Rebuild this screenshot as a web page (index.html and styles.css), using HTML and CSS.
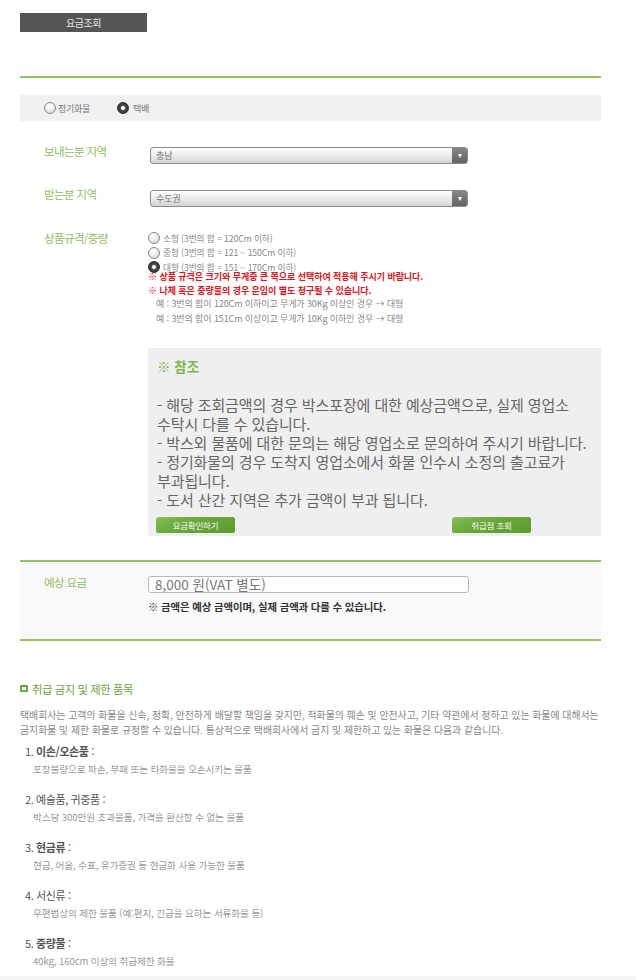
FILE: index.html
```html
<!DOCTYPE html>
<html lang="ko">
<head>
<meta charset="utf-8">
<title>요금조회</title>
<link rel="stylesheet" href="styles.css">
</head>
<body>
<div class="page">
  <div class="tab">요금조회</div>
  <div class="rule rule-top"></div>

  <div class="typebar">
    <span class="opt"><span class="radio"></span>정기화물</span>
    <span class="opt opt-2"><span class="radio on"></span>택배</span>
  </div>

  <div class="row row-first">
    <div class="label">보내는분 지역</div>
    <div class="select"><span class="sel-text">충남</span><span class="sel-arrow"></span></div>
  </div>

  <div class="row">
    <div class="label">받는분 지역</div>
    <div class="select"><span class="sel-text">수도권</span><span class="sel-arrow"></span></div>
  </div>

  <div class="row row-size">
    <div class="label label-size">상품규격/중량</div>
    <div class="sizes">
      <div class="size"><span class="radio"></span>소형 (3번의 합 = 120Cm 이하)</div>
      <div class="size"><span class="radio"></span>중형 (3번의 합 = 121 ~ 150Cm 이하)</div>
      <div class="size size-last"><span class="radio on"></span>대형 (3번의 합 = 151 ~ 170Cm 이하)</div>
      <div class="warn">※ 상품 규격은 크기와 무게중 큰 쪽으로 선택하여 적용해 주시기 바랍니다.</div>
      <div class="warn">※ 나체 혹은 중량물의 경우 운임이 별도 청구될 수 있습니다.</div>
      <div class="ex ex-first">예 : 3번의 합이 120Cm 이하이고 무게가 30Kg 이상인 경우 → 대형</div>
      <div class="ex">예 : 3번의 합이 151Cm 이상이고 무게가 10Kg 이하인 경우 → 대형</div>
    </div>
  </div>

  <div class="note-box">
    <div class="note-title">※ 참조</div>
    <div class="note-text">- 해당 조회금액의 경우 박스포장에 대한 예상금액으로, 실제 영업소<br>수탁시 다를 수 있습니다.<br>- 박스외 물품에 대한 문의는 해당 영업소로 문의하여 주시기 바랍니다.<br>- 정기화물의 경우 도착지 영업소에서 화물 인수시 소정의 출고료가<br>부과됩니다.<br>- 도서 산간 지역은 추가 금액이 부과 됩니다.</div>
    <div class="btns">
      <span class="btn">요금확인하기</span>
      <span class="btn btn-2">취급점 조회</span>
    </div>
  </div>

  <div class="rule rule-mid"></div>
  <div class="estimate">
    <div class="label label-est">예상 요금</div>
    <div class="est-body">
      <div class="est-input">8,000 원(VAT 별도)</div>
      <div class="est-note">※ 금액은 예상 금액이며, 실제 금액과 다를 수 있습니다.</div>
    </div>
  </div>
  <div class="rule rule-bottom"></div>

  <div class="sec-title"><span class="sec-icon"></span>취급 금지 및 제한 품목</div>
  <div class="sec-text">택배회사는 고객의 화물을 신속, 정확, 안전하게 배달할 책임을 갖지만, 적화물의 훼손 및 안전사고, 기타 약관에서 정하고 있는 화물에 대해서는<br>금지화물 및 제한 화물로 규정할 수 있습니다. 통상적으로 택배회사에서 금지 및 제한하고 있는 화물은 다음과 같습니다.</div>

  <div class="items">
    <div class="item">
      <div class="item-title">1. <b>이손/오손품</b> :</div>
      <div class="item-desc">포장불량으로 파손, 부패 또는 타화물을 오손시키는 물품</div>
    </div>
    <div class="item">
      <div class="item-title">2. 예술품, 귀중품 :</div>
      <div class="item-desc">박스당 300만원 초과물품, 가격을 환산할 수 없는 물품</div>
    </div>
    <div class="item">
      <div class="item-title">3. <b>현금류</b> :</div>
      <div class="item-desc">현금, 어음, 수표, 유가증권 등 현금화 사용 가능한 물품</div>
    </div>
    <div class="item">
      <div class="item-title">4. 서신류 :</div>
      <div class="item-desc">우편법상의 제한 물품 (예:편지, 긴급을 요하는 서류화물 등)</div>
    </div>
    <div class="item">
      <div class="item-title">5. <b>중량물</b> :</div>
      <div class="item-desc">40kg, 160cm 이상의 취급제한 화물</div>
    </div>
  </div>
  <div class="footer"></div>
</div>
</body>
</html>
```

FILE: styles.css
```css
html, body {
  margin: 0;
  padding: 0;
  background: #fff;
}
body {
  font-family: "Noto Sans CJK KR", "Noto Sans", sans-serif;
  color: #666;
}
.page {
  width: 581px;
  padding: 13px 0 0 20px;
}
.tab {
  width: 127px;
  height: 19px;
  line-height: 19px;
  background: #555;
  color: #e8e8e8;
  font-size: 10px;
  letter-spacing: -0.4px;
  text-align: center;
}
.rule {
  height: 2px;
  background: #93c460;
}
.rule-top { margin-top: 44px; }

.typebar {
  margin-top: 17px;
  height: 26px;
  background: #f1f1f1;
  display: flex;
  align-items: center;
  padding-left: 24px;
  font-size: 9px;
  color: #777;
  letter-spacing: -0.3px;
}
.opt {
  display: flex;
  align-items: center;
}
.opt-2 { margin-left: 27px; }
.opt-2 .radio { margin-right: 4px; }
.radio {
  width: 10px;
  height: 10px;
  border: 1px solid #8a8a8a;
  border-radius: 50%;
  background: radial-gradient(circle at 40% 35%, #fff 0, #f4f4f4 35%, #c9c9c9 100%);
  margin-right: 2px;
  flex: none;
  position: relative;
  box-sizing: content-box;
}
.radio.on {
  border-color: #2e2e2e;
  background: radial-gradient(circle at 50% 50%, #fff 0, #eee 22%, #555 34%, #3a3a3a 60%, #222 100%);
}

.row {
  display: flex;
  align-items: flex-start;
  padding-left: 24px;
  margin-top: 26px;
}
.label {
  width: 106px;
  flex: none;
  font-size: 11.5px;
  letter-spacing: -0.6px;
  color: #8dc05d;
  line-height: 17px;
  margin-top: -4px;
}
.select {
  width: 318px;
  height: 17px;
  box-sizing: border-box;
  border: 1px solid #8d8d8d;
  border-radius: 3px;
  background: linear-gradient(#fdfdfd, #e9e9e9 55%, #d4d4d4);
  display: flex;
  align-items: center;
  position: relative;
  overflow: hidden;
}
.sel-text {
  flex: 1;
  padding-left: 5px;
  font-size: 9px;
  color: #777;
  line-height: 15px;
}
.sel-arrow {
  width: 16px;
  height: 17px;
  margin: -1px -1px -1px 0;
  background: linear-gradient(#8a8a8a, #5f5f5f);
  border-radius: 0 3px 3px 0;
  position: relative;
}
.sel-arrow::after {
  content: "";
  position: absolute;
  left: 6px;
  top: 7px;
  border-left: 2.5px solid transparent;
  border-right: 2.5px solid transparent;
  border-top: 4px solid #fff;
}

.row-size { margin-top: 24px; }
.label-size { width: 104px; margin-top: -1px; }
.sizes {
  font-size: 8.7px;
  color: #888;
  letter-spacing: -0.1px;
  white-space: nowrap;
}
.size {
  display: flex;
  align-items: center;
  height: 14.5px;
}
.size .radio {
  width: 10px;
  height: 10px;
  margin-right: 3px;
}
.size-last { margin-bottom: -5px; }
.warn {
  color: #e0141b;
  font-weight: 700;
  font-size: 9px;
  line-height: 14px;
  letter-spacing: -0.05px;
}
.ex {
  line-height: 15px;
  padding-left: 8px;
  font-size: 9px;
}
.ex-first { margin-top: -2px; }

.note-box {
  margin-top: 22px;
  margin-left: 128px;
  width: 453px;
  background: #efefef;
  padding: 8px 0 3px 9px;
  box-sizing: border-box;
}
.note-title {
  font-size: 13.5px;
  font-weight: 700;
  color: #7bb84a;
  line-height: 20px;
}
.note-text {
  margin-top: 19px;
  font-size: 15px;
  line-height: 19px;
  color: #666;
  white-space: nowrap;
  letter-spacing: -0.1px;
}
.btns {
  display: flex;
  margin-top: 8px;
  margin-left: -1px;
}
.btn {
  width: 79px;
  height: 16px;
  line-height: 16px;
  text-align: center;
  font-size: 8.5px;
  color: #fff;
  background: linear-gradient(160deg, #86bf57 0, #6aa83a 40%, #5e9c30 100%);
  border-radius: 3px 2px 2px 2px;
  letter-spacing: -0.2px;
}
.btn-2 { margin-left: 217px; }

.rule-mid { margin-top: 24px; }
.estimate {
  background: #f9f9f9;
  display: flex;
  align-items: flex-start;
  padding: 14px 0 25px 24px;
}
.label-est { width: 104px; margin-top: -2px; }
.est-input {
  width: 321px;
  height: 17px;
  box-sizing: border-box;
  border: 1px solid #b8b8b8;
  border-radius: 3px;
  background: #fff;
  font-size: 13.5px;
  color: #777;
  line-height: 15px;
  padding-left: 6px;
  letter-spacing: 0;
}
.est-note {
  margin-top: 7px;
  font-size: 10.4px;
  font-weight: 700;
  color: #333;
  line-height: 14px;
  letter-spacing: -0.1px;
}
.rule-bottom { height: 2px; }

.sec-title {
  margin-top: 41px;
  display: flex;
  align-items: center;
  font-size: 11.3px;
  color: #6aa63a;
  line-height: 14px;
  letter-spacing: -0.4px;
}
.sec-icon {
  width: 4px;
  height: 3px;
  border: 2px solid #6aa63a;
  border-radius: 1px;
  margin-right: 4px;
  background: #fff;
}
.sec-text {
  margin-top: 12px;
  font-size: 9.9px;
  line-height: 15px;
  color: #888;
  white-space: nowrap;
}
.items {
  margin-top: 6px;
}
.item + .item { margin-top: 16px; }
.item-title {
  padding-left: 5px;
  font-size: 11px;
  line-height: 14px;
  color: #555;
  letter-spacing: -0.4px;
}
.item-title b { font-weight: 600; }
.item-desc {
  margin-top: 4px;
  padding-left: 13px;
  font-size: 9.6px;
  line-height: 14px;
  color: #999;
  letter-spacing: -0.1px;
}
.footer {
  margin-top: 8px;
  height: 20px;
  margin-left: -20px;
  width: 636px;
  background: linear-gradient(#f7f7f7, #eee);
}
```
